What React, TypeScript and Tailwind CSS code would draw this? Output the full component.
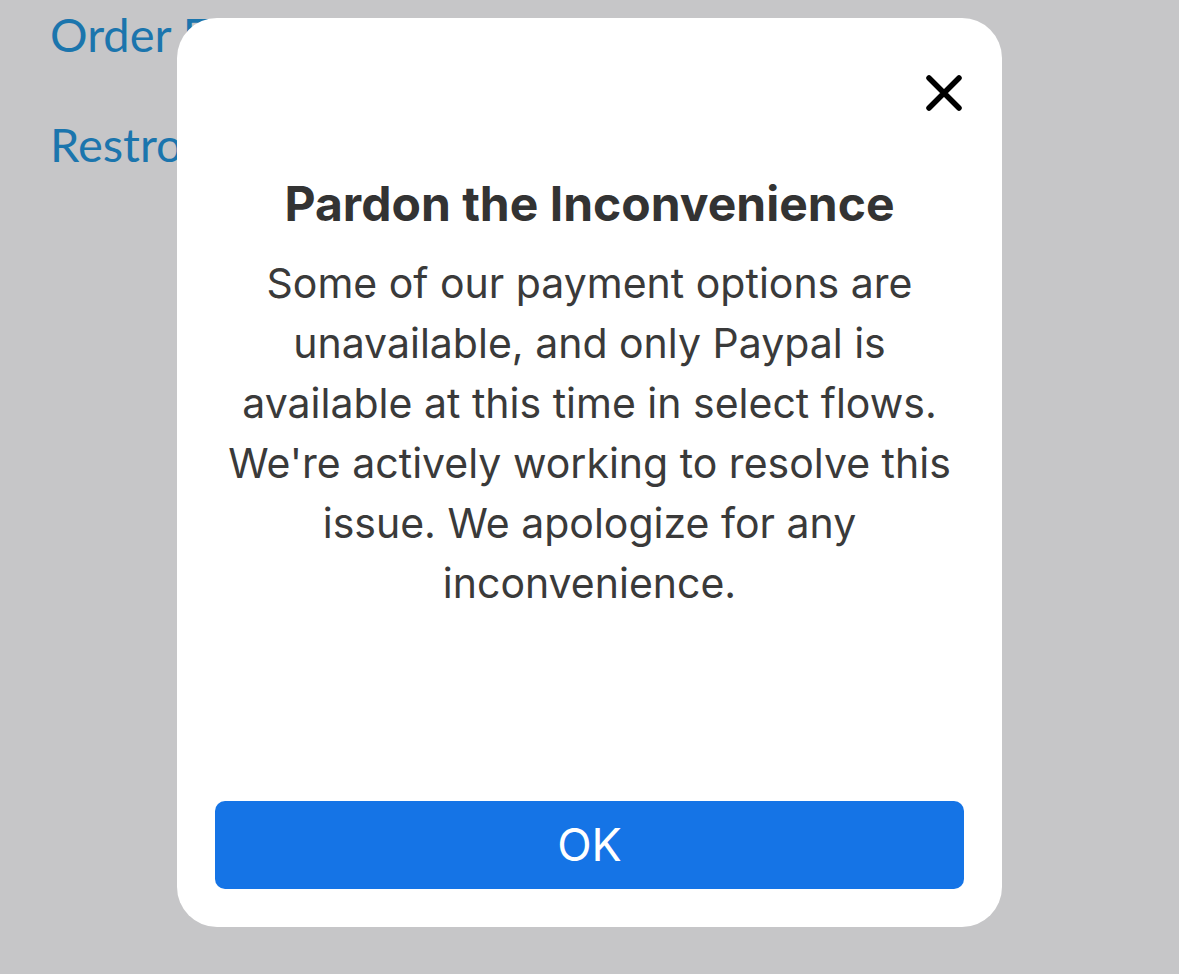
import React from "react";

const CloseIcon = () => (
  <svg width="36" height="36" viewBox="0 0 36 36" fill="none">
    <path
      d="M3 3 L33 33 M33 3 L3 33"
      stroke="#000"
      strokeWidth="5.5"
      strokeLinecap="round"
    />
  </svg>
);

const App = () => {
  return (
    <div className="relative h-[974px] w-full overflow-hidden bg-[#c6c6c8]">
      <div
        className="flex flex-col gap-[62px] pl-[50px] pt-[10px] text-[47px] leading-[48px] text-[#1b75ad]"
        style={{ fontFamily: "Lato, sans-serif" }}
      >
        <span>Order Food</span>
        <span>Restrooms</span>
      </div>

      <div
        className="absolute left-[177px] top-[18px] flex h-[909px] w-[825px] flex-col rounded-[40px] bg-white px-[38px] pb-[38px]"
        style={{ fontFamily: "Inter, 'Liberation Sans', sans-serif" }}
      >
        <div className="flex justify-end pr-[2px] pt-[57px]">
          <button className="flex items-center justify-center">
            <CloseIcon />
          </button>
        </div>

        <h2 className="mt-[65px] text-center text-[48px] font-bold leading-[55px] text-[#333]">
          Pardon the Inconvenience
        </h2>
        <p className="mx-auto mt-[22px] w-[730px] text-center text-[41px] leading-[60px] text-[#3a3a3a]">
          Some of our payment options are unavailable, and only Paypal is
          available at this time in select flows. We're actively working to
          resolve this issue. We apologize for any inconvenience.
        </p>

        <button className="mt-auto flex h-[88px] w-full items-center justify-center rounded-[10px] bg-[#1574e6] text-[45px] text-white">
          OK
        </button>
      </div>
    </div>
  );
};

export default App;
